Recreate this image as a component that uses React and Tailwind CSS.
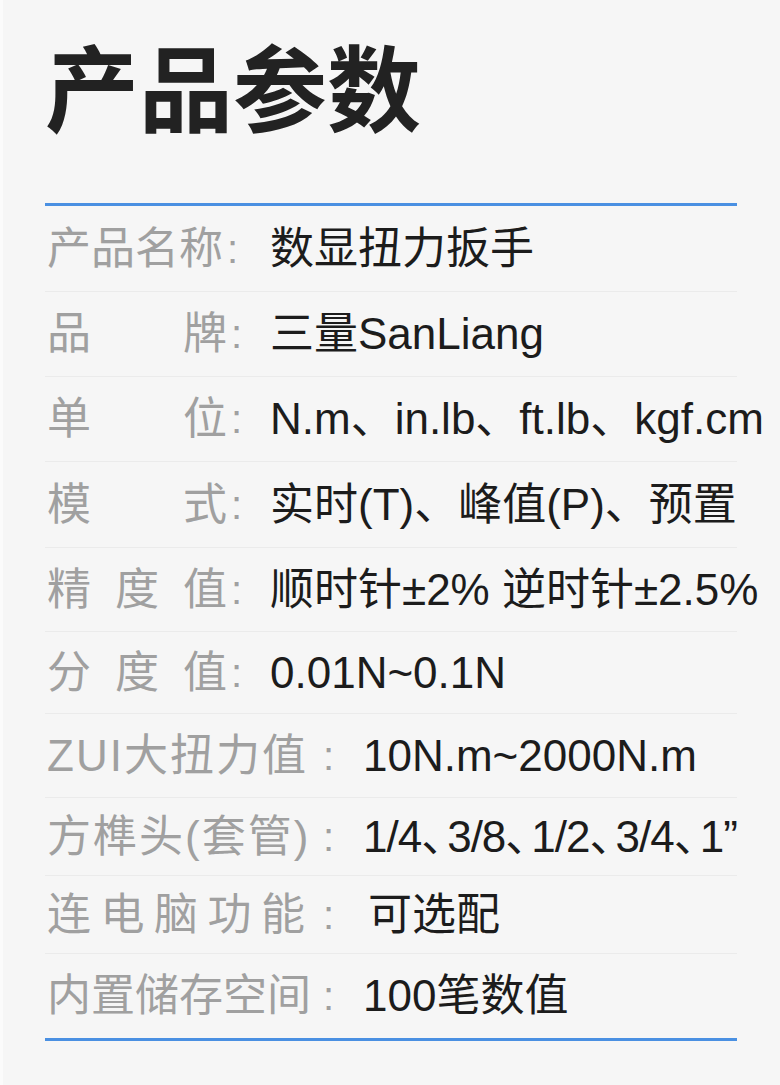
const specs = [
  { label: ['产', '品', '名', '称'], value: '数显扭力扳手', h: 'h-[85px]', w: 'w-[172px]', colon: 'ml-[8px]', gap: 'w-[225px]' },
  { label: ['品', '牌'], value: '三量SanLiang', h: 'h-[84px]', w: 'w-[180px]', colon: 'ml-[4px]', gap: 'w-[225px]' },
  { label: ['单', '位'], value: 'N.m、in.lb、ft.lb、kgf.cm', h: 'h-[84px]', w: 'w-[180px]', colon: 'ml-[4px]', gap: 'w-[225px]' },
  { label: ['模', '式'], value: '实时(T)、峰值(P)、预置', h: 'h-[85px]', w: 'w-[180px]', colon: 'ml-[4px]', gap: 'w-[225px]' },
  { label: ['精', '度', '值'], value: '顺时针±2% 逆时针±2.5%', h: 'h-[83px]', w: 'w-[180px]', colon: 'ml-[4px]', gap: 'w-[225px]' },
  { label: ['分', '度', '值'], value: '0.01N~0.1N', h: 'h-[81px]', w: 'w-[180px]', colon: 'ml-[4px]', gap: 'w-[225px]' },
  { label: ['ZUI大扭力值'], value: '10N.m~2000N.m', h: 'h-[83px]', w: 'w-[266px]', colon: 'ml-[10px]', gap: 'w-[318px]', track: 'tracking-[2px]' },
  { label: ['方榫头(套管)'], value: 'narrow', h: 'h-[77px]', w: 'w-[266px]', colon: 'ml-[10px]', gap: 'w-[318px]', track: 'tracking-[2px]' },
  { label: ['连', '电', '脑', '功', '能'], value: '可选配', h: 'h-[77px]', w: 'w-[258px]', colon: 'ml-[18px]', gap: 'w-[323px]' },
  { label: ['内置储存空间'], value: '100笔数值', h: 'h-[84px]', w: 'w-[270px]', colon: 'ml-[6px]', gap: 'w-[318px]' },
];

const cjk = { fontFamily: '"Liberation Sans", "Noto Sans CJK SC", sans-serif' };

// sizes row uses a tighter enumeration comma than the full-width one
function Sizes() {
  return <span className="tracking-[-1px]">1/4<span className="tracking-[-18px]">、</span>3/8<span className="tracking-[-18px]">、</span>1/2<span className="tracking-[-18px]">、</span>3/4<span className="tracking-[-18px]">、</span>1”</span>;
}

function Row({ spec, last }) {
  return (
    <div className={`${spec.h} flex items-center ${last ? '' : 'border-b border-[#ebebeb]'} box-content`}>
      <div className={`${spec.gap} flex shrink-0 items-center pl-[2px] text-[#a0a0a0]`}>
        <div className={`${spec.w} flex justify-between ${spec.track || ''}`}>
          {spec.label.map((c) => (
            <span key={c}>{c}</span>
          ))}
        </div>
        <span className={`${spec.colon} text-[40px]`}>:</span>
      </div>
      <div className="whitespace-nowrap text-[#1c1c1c]">
        {spec.value === 'narrow' ? <Sizes /> : spec.value}
      </div>
    </div>
  );
}

export default function App() {
  return (
    <div className="h-[1085px] w-[780px] overflow-hidden border-l-[3px] border-[#fbfbfb] bg-[#f6f6f6]" style={cjk}>
      <div className="pl-[42px] pr-[43px]">
        <h1 className="h-[203px] pt-[46px] text-[94px] font-bold leading-none text-[#222222]">产品参数</h1>
        <div className="h-[3px] bg-[#4a90e2]" />
        <div className="text-[44px] leading-none">
          {specs.map((s, i) => (
            <Row key={i} spec={s} last={i === specs.length - 1} />
          ))}
        </div>
        <div className="h-[3px] bg-[#4a90e2]" />
      </div>
    </div>
  );
}
